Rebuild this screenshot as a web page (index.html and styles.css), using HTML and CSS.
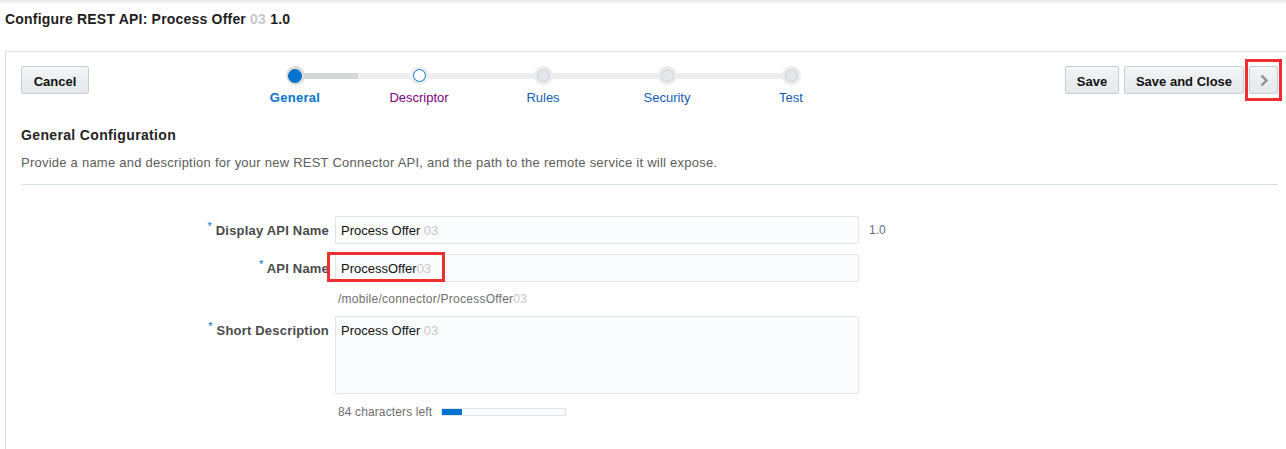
FILE: index.html
```html
<!DOCTYPE html>
<html>
<head>
<meta charset="utf-8">
<link rel="stylesheet" href="styles.css">
</head>
<body>
<div class="topshade"></div>
<h1 class="title">Configure REST API: Process Offer <span class="blur">03</span> 1.0</h1>
<div class="panel">
  <div class="toolbar">
    <button class="btn btn-cancel">Cancel</button>
    <div class="train">
      <div class="stop done-seg current">
        <span class="dot"></span>
        <span class="lbl">General</span>
      </div>
      <div class="stop visited">
        <span class="dot"></span>
        <span class="lbl">Descriptor</span>
      </div>
      <div class="stop">
        <span class="dot"></span>
        <span class="lbl">Rules</span>
      </div>
      <div class="stop">
        <span class="dot"></span>
        <span class="lbl">Security</span>
      </div>
      <div class="stop last">
        <span class="dot"></span>
        <span class="lbl">Test</span>
      </div>
    </div>
    <div class="actions">
      <button class="btn btn-save">Save</button>
      <button class="btn btn-saveclose">Save and Close</button>
      <span class="hl-wrap">
        <button class="btn arrow"><svg width="10" height="13" viewBox="0 0 10 13"><path d="M2.5 1.5 L7.5 6.5 L2.5 11.5" fill="none" stroke="#8a8f94" stroke-width="2.4"/></svg></button>
        <span class="hl hl-arrow"></span>
      </span>
    </div>
  </div>

  <h2 class="section">General Configuration</h2>
  <p class="desc">Provide a name and description for your new REST Connector API, and the path to the remote service it will expose.</p>
  <div class="sep"></div>

  <div class="form">
    <label class="flabel"><sup>*</sup> Display API Name</label>
    <div class="fval">
      <div class="inrow">
        <div class="input">Process Offer <span class="blur">03</span></div>
        <span class="ver">1.0</span>
      </div>
    </div>

    <label class="flabel"><sup>*</sup> API Name</label>
    <div class="fval">
      <div class="input hl-wrap">ProcessOffer<span class="blur">03</span><span class="hl hl-name"></span></div>
      <div class="hint">/mobile/connector/ProcessOffer<span class="blur">03</span></div>
    </div>

    <label class="flabel"><sup>*</sup> Short Description</label>
    <div class="fval">
      <div class="input area">Process Offer <span class="blur">03</span></div>
      <div class="counter">
        <span>84 characters left</span>
        <span class="meter"><span class="fill" style="width:16%"></span></span>
      </div>
    </div>
  </div>
</div>
</body>
</html>
```

FILE: styles.css
```css
* { box-sizing: border-box; }
html, body { margin: 0; padding: 0; background: #fff; }
body {
  font-family: "Liberation Sans", Arial, sans-serif;
  color: #333;
  width: 1286px;
  height: 449px;
  overflow: hidden;
  position: relative;
}
.topshade {
  height: 4px;
  background: linear-gradient(#e6e6e6, #ffffff);
}
.title {
  margin: 0;
  padding: 7px 0 0 5px;
  font-size: 14px;
  line-height: 16px;
  letter-spacing: 0.2px;
  font-weight: bold;
  color: #1e1e1e;
  height: 47px;
}
.blur { color: #c8c8c8; }
.panel {
  margin-left: 5px;
  border-top: 1px solid #d9dfe3;
  border-left: 1px solid #d9dfe3;
  padding: 14px 8px 0 15px;
  height: 400px;
}
.toolbar {
  display: flex;
  align-items: flex-start;
  height: 61px;
}
.btn {
  font-family: "Liberation Sans", Arial, sans-serif;
  font-size: 13px;
  font-weight: bold;
  color: #111;
  height: 28px;
  padding: 2px 0 0;
  text-align: center;
  border: 1px solid #c4ced7;
  border-radius: 2px;
  background: linear-gradient(#f3f5f6, #e5e9ec);
  cursor: pointer;
}
.btn-cancel { width: 68px; }
.btn-save { width: 54px; }
.btn-saveclose { width: 120px; }
.train {
  display: flex;
  margin-left: 144px;
  margin-top: 0;
}
.stop {
  width: 124px;
  display: flex;
  flex-direction: column;
  align-items: center;
  position: relative;
}
.stop::before {
  content: "";
  position: absolute;
  left: 62px;
  top: 7px;
  width: 124px;
  height: 6px;
  background: #ededed;
}
.stop.done-seg::before {
  background: linear-gradient(to right, #d5d6d8 0 63px, #ededed 63px);
}
.stop.last::before { display: none; }
.dot {
  position: relative;
  z-index: 1;
  width: 19px;
  height: 19px;
  border-radius: 50%;
  background: #ececec;
  display: flex;
  align-items: center;
  justify-content: center;
}
.dot::after {
  content: "";
  width: 13px;
  height: 13px;
  border-radius: 50%;
  box-sizing: border-box;
  background: #e3e7ea;
  border: 1px solid #c9d1d8;
}
.current .dot { background: #dcdcdc; }
.current .dot::after { background: #0572ce; border-color: #0572ce; width: 14px; height: 14px; }
.visited .dot { background: #f0f0f0; }
.visited .dot::after { background: #fff; border: 1.5px solid #0572ce; }
.lbl {
  margin-top: 5px;
  font-size: 13px;
  line-height: 16px;
  color: #145cb4;
}
.current .lbl { font-weight: bold; color: #0572ce; letter-spacing: 0.3px; }
.visited .lbl { color: #800080; }
.actions {
  margin-left: auto;
  display: flex;
  gap: 5px;
}
.btn.arrow {
  width: 29px;
  padding: 0;
  display: flex;
  align-items: center;
  justify-content: center;
}
.hl-wrap { position: relative; display: inline-block; }
.hl {
  position: absolute;
  border: 3px solid #ee2f2f;
  pointer-events: none;
}
.hl-arrow { left: -4px; top: -7px; right: -4px; bottom: -7px; }
.section {
  margin: 0;
  font-size: 14px;
  line-height: 16px;
  letter-spacing: 0.35px;
  font-weight: bold;
  color: #252525;
}
.desc {
  margin: 12px 0 0 0;
  font-size: 13px;
  line-height: 16px;
  letter-spacing: 0.24px;
  color: #5c5c5c;
}
.sep {
  margin-top: 13px;
  height: 1px;
  background: #d6dfe6;
}
.form {
  margin-top: 31px;
  display: grid;
  grid-template-columns: 308px 1fr;
  column-gap: 6px;
  row-gap: 10px;
}
.flabel {
  text-align: right;
  font-size: 13px;
  font-weight: bold;
  letter-spacing: 0.2px;
  color: #4a4a4a;
  height: 28px;
  line-height: 28px;
  padding-top: 1px;
  white-space: nowrap;
}
.flabel sup {
  color: #0572ce;
  font-weight: normal;
  font-size: 11px;
  vertical-align: 5px;
  line-height: 0;
}
.inrow { display: flex; align-items: center; }
.input {
  width: 524px;
  height: 28px;
  border: 1px solid #dfe4e7;
  border-radius: 2px;
  background: #fbfcfd;
  font-size: 13px;
  line-height: 26px;
  padding: 1px 5px 0;
  color: #111;
}
.ver { margin-left: 10px; font-size: 12px; color: #6a6c85; }
.hl-name { left: -9px; top: -3px; width: 118px; height: 30px; }
.hint {
  margin-top: 10px;
  font-size: 12px;
  line-height: 14px;
  letter-spacing: 0.25px;
  color: #6f6f6f;
  padding-left: 3px;
}
.area {
  height: 78px;
  line-height: 26px;
}
.counter {
  margin-top: 11px;
  display: flex;
  align-items: center;
  padding-left: 3px;
  font-size: 12px;
  line-height: 14px;
  letter-spacing: 0.12px;
  color: #6f6f6f;
}
.meter {
  margin-left: 9px;
  width: 125px;
  height: 8px;
  border: 1px solid #dfe4e7;
  background: #fbfcfd;
  display: inline-block;
}
.fill { display: block; height: 100%; background: #0572ce; }
```
